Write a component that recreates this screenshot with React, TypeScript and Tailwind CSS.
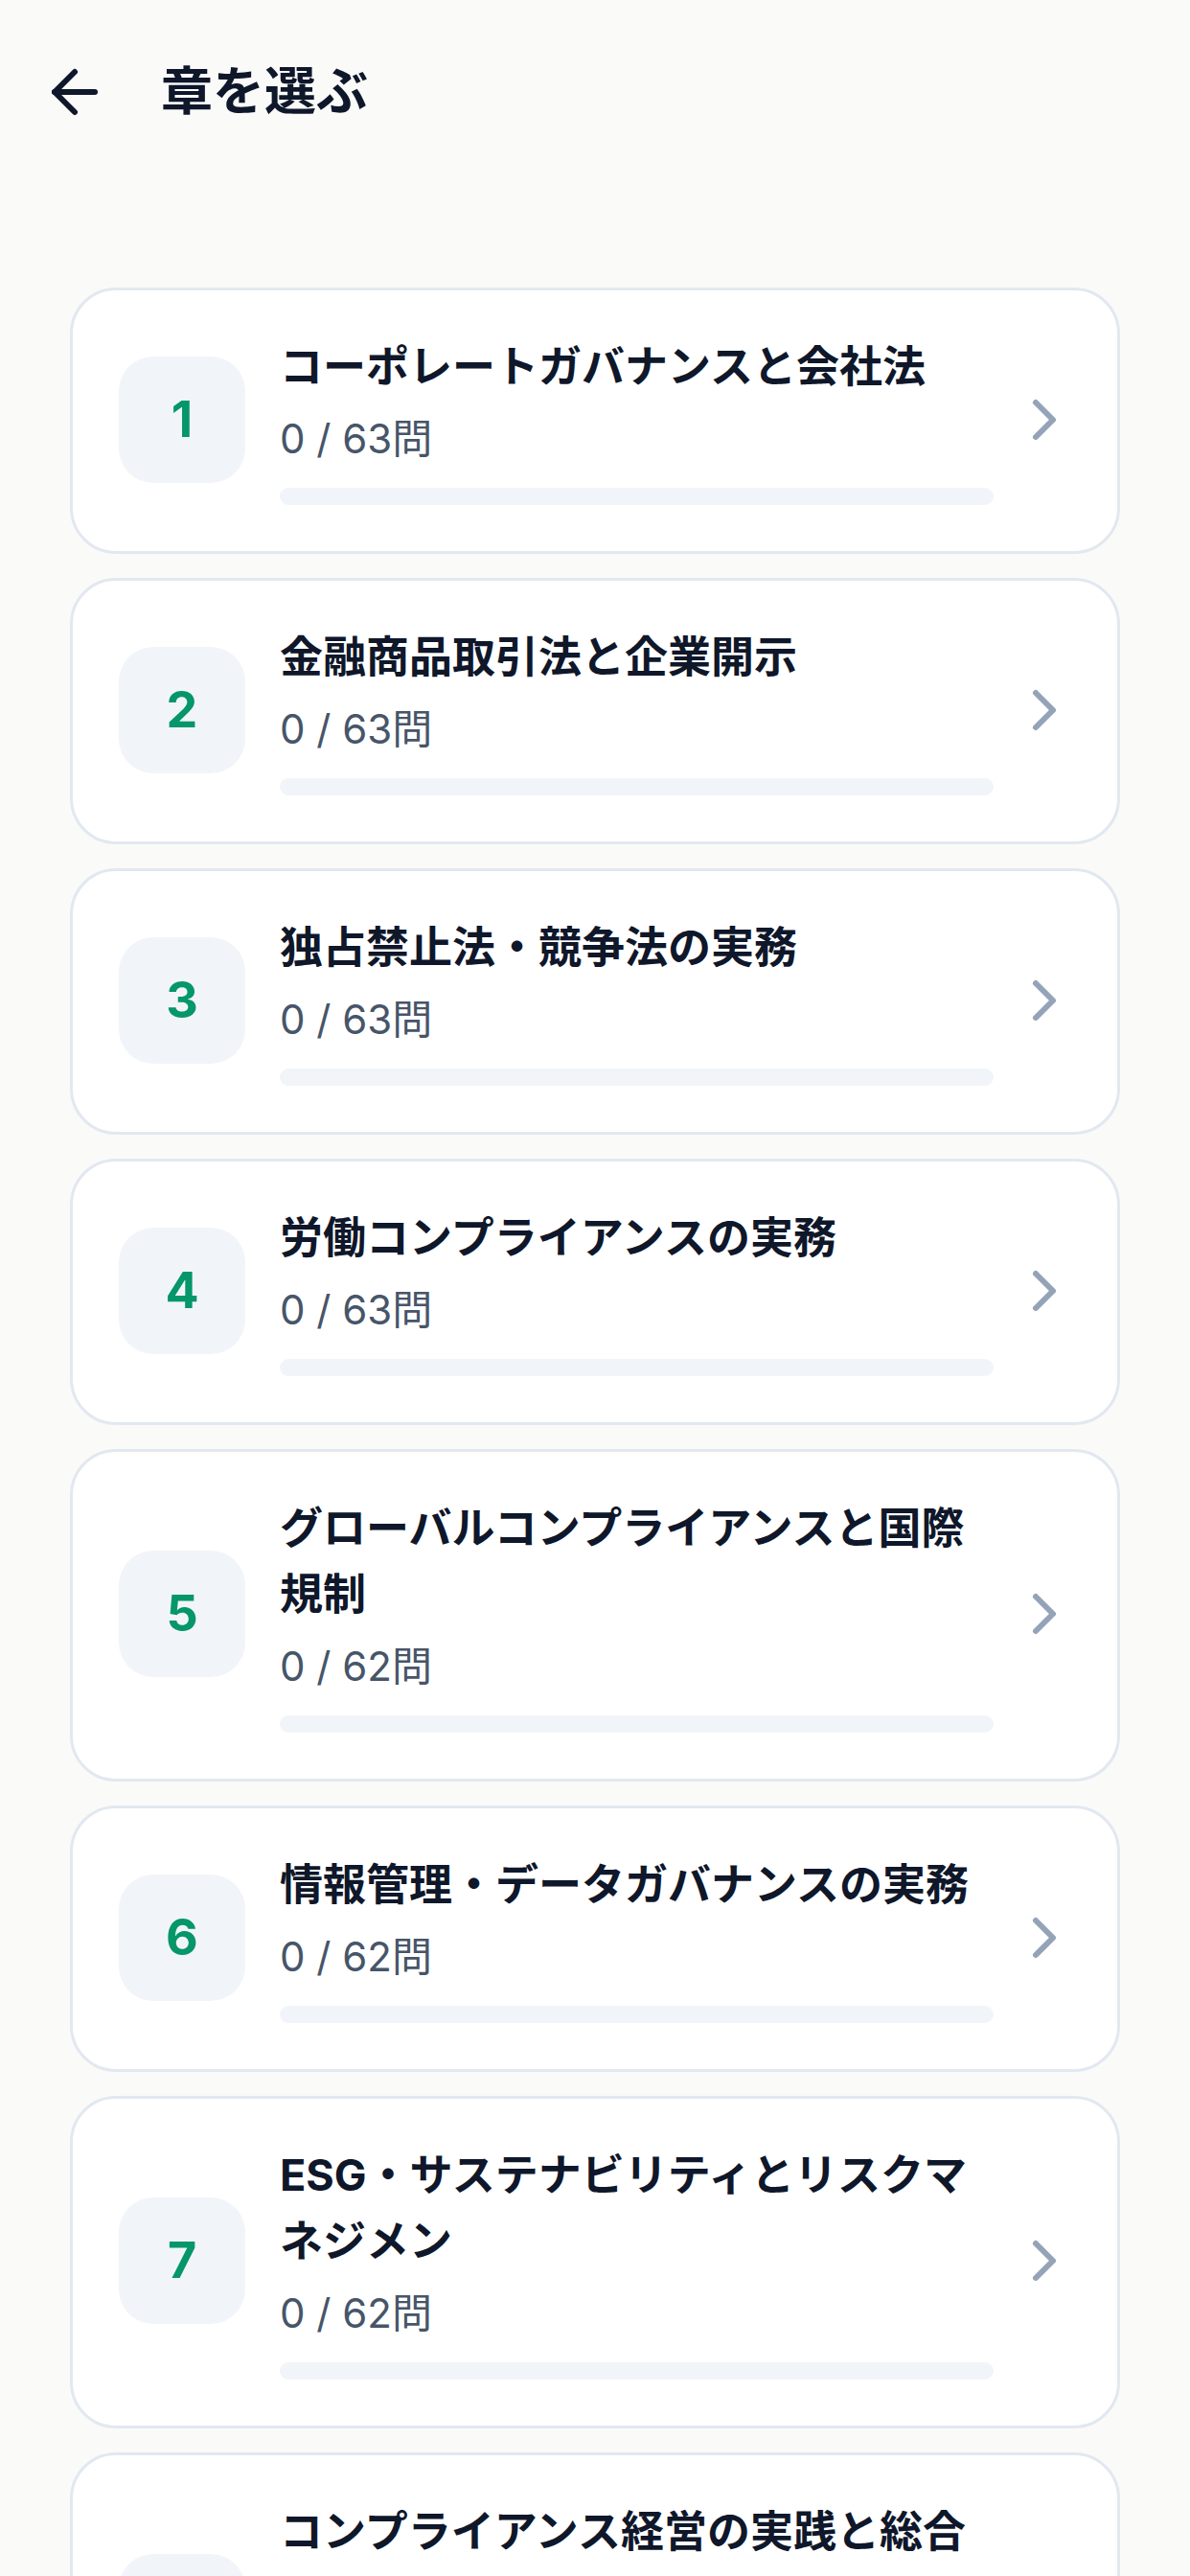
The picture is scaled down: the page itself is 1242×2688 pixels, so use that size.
import React from 'react';
import { ArrowLeft, ChevronRight } from 'lucide-react';

type Chapter = {
  no: number;
  title: string;
  total: number;
  done: number;
};

const chapters: Chapter[] = [
  { no: 1, title: 'コーポレートガバナンスと会社法', total: 63, done: 0 },
  { no: 2, title: '金融商品取引法と企業開示', total: 63, done: 0 },
  { no: 3, title: '独占禁止法・競争法の実務', total: 63, done: 0 },
  { no: 4, title: '労働コンプライアンスの実務', total: 63, done: 0 },
  { no: 5, title: 'グローバルコンプライアンスと国際規制', total: 62, done: 0 },
  { no: 6, title: '情報管理・データガバナンスの実務', total: 62, done: 0 },
  { no: 7, title: 'ESG・サステナビリティとリスクマネジメン', total: 62, done: 0 },
  { no: 8, title: 'コンプライアンス経営の実践と総合演習', total: 62, done: 0 },
];

const ChapterCard: React.FC<{ chapter: Chapter }> = ({ chapter }) => {
  const pct = chapter.total ? (chapter.done / chapter.total) * 100 : 0;
  return (
    <button className="w-full flex items-center text-left bg-white border-[3px] border-[#e2e8f0] rounded-[48px] pl-[48px] pr-[40px] pt-[45px] pb-[48px]">
      {/* Number badge */}
      <div className="w-[132px] h-[132px] shrink-0 rounded-[36px] bg-[#f1f5f9] flex items-center justify-center">
        <span className="text-[52px] font-bold text-[#059669] leading-none">{chapter.no}</span>
      </div>

      {/* Title + progress */}
      <div className="flex-1 min-w-0 ml-[36px]">
        <div className="text-[45px] leading-[69px] font-bold text-[#0f172a]">{chapter.title}</div>
        <div className="mt-[11px] text-[42px] leading-[60px] text-[#475569]">
          {chapter.done} / {chapter.total}問
        </div>
        <div className="mt-[21px] h-[18px] rounded-full bg-[#f1f5f9] overflow-hidden">
          <div className="h-full rounded-full bg-[#059669]" style={{ width: `${pct}%` }} />
        </div>
      </div>

      <ChevronRight size={72} strokeWidth={2} className="shrink-0 ml-[17px] text-[#94a3b8]" />
    </button>
  );
};

export default function App() {
  return (
    <div className="min-h-screen bg-[#fafaf9] font-[Inter,'Noto_Sans_CJK_JP',sans-serif]">
      {/* Header */}
      <header className="h-[192px] flex items-center pl-[42px]">
        <button className="text-[#0f172a]">
          <ArrowLeft size={72} strokeWidth={2} />
        </button>
        <h1 className="ml-[54px] text-[54px] font-bold text-[#0f172a] leading-none">章を選ぶ</h1>
      </header>

      {/* Chapter list */}
      <main className="px-[73px] pt-[108px] pb-[72px] flex flex-col gap-[25px]">
        {chapters.map((c) => (
          <ChapterCard key={c.no} chapter={c} />
        ))}
      </main>
    </div>
  );
}
